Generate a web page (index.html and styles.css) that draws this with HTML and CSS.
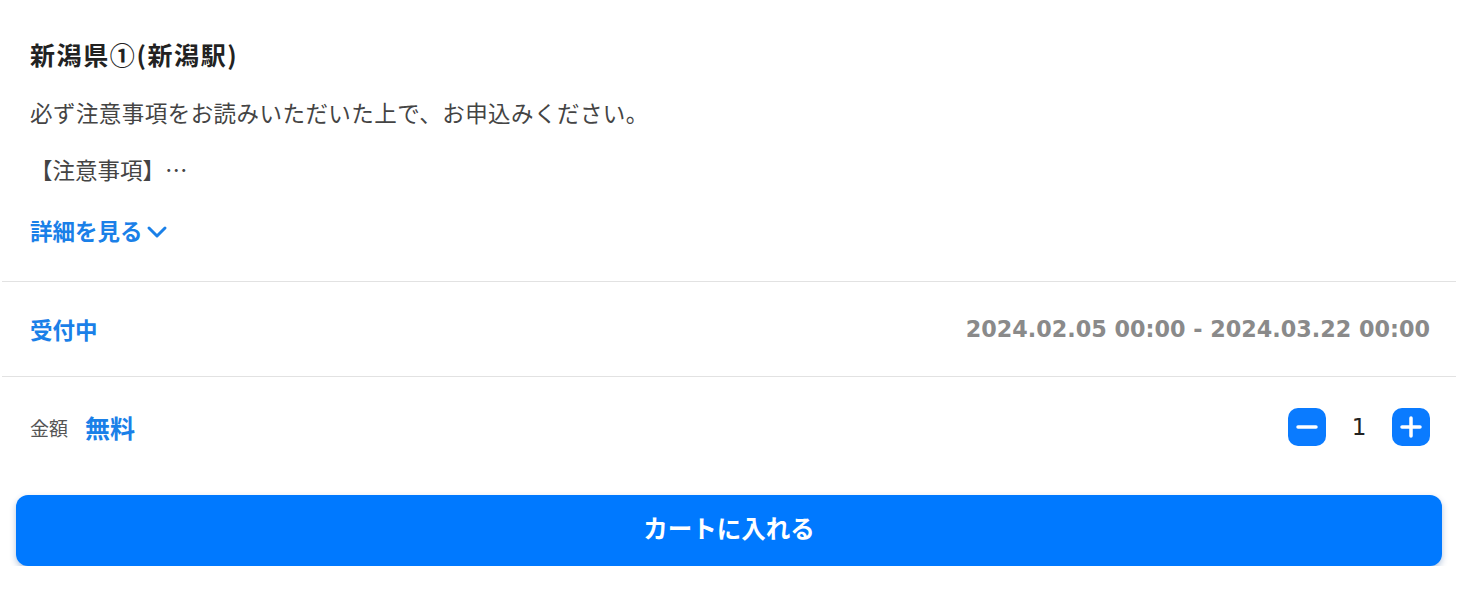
FILE: index.html
```html
<!DOCTYPE html>
<html lang="ja">
<head>
  <meta charset="UTF-8">
  <meta name="viewport" content="width=device-width, initial-scale=1.0">
  <title>新潟県①(新潟駅)</title>
  <link rel="stylesheet" href="styles.css">
</head>
<body>
  <div class="item">
    <div class="item-head">
      <h2 class="item-title">新潟県①(新潟駅)</h2>
      <p class="item-lead">必ず注意事項をお読みいただいた上で、お申込みください。</p>
      <p class="item-note">【注意事項】…</p>
      <a class="item-more" href="#">詳細を見る
        <svg class="chevron" width="22" height="16" viewBox="0 0 22 16">
          <path d="M3 4 L11 12 L19 4" fill="none" stroke="currentColor" stroke-width="3" stroke-linecap="round" stroke-linejoin="round"/>
        </svg>
      </a>
    </div>

    <div class="item-row status-row">
      <span class="status">受付中</span>
      <span class="period">2024.02.05 00:00 - 2024.03.22 00:00</span>
    </div>

    <div class="item-row price-row">
      <div class="price">
        <span class="price-label">金額</span>
        <span class="price-value">無料</span>
      </div>
      <div class="qty">
        <button class="qty-btn" aria-label="減らす">
          <svg width="38" height="38" viewBox="0 0 38 38">
            <path d="M10 19 H28" stroke="#fff" stroke-width="3.5" stroke-linecap="round"/>
          </svg>
        </button>
        <span class="qty-num">1</span>
        <button class="qty-btn" aria-label="増やす">
          <svg width="38" height="38" viewBox="0 0 38 38">
            <path d="M10 19 H28 M19 10 V28" stroke="#fff" stroke-width="3.5" stroke-linecap="round"/>
          </svg>
        </button>
      </div>
    </div>

    <button class="cart-btn">カートに入れる</button>
  </div>
</body>
</html>
```

FILE: styles.css
```css
body {
  margin: 0;
  background: #ffffff;
  font-family: "Noto Sans CJK JP", "DejaVu Sans", sans-serif;
  color: #333333;
}
.item {
  margin: 0 26px 0 2px;
}
.item-head {
  padding: 35px 28px 34px;
  border-bottom: 1px solid #e2e2e2;
}
.item-title {
  margin: 0 0 22px;
  font-size: 25px;
  line-height: 38px;
  font-weight: bold;
  letter-spacing: 1.6px;
  color: #222222;
}
.item-lead {
  margin: 0 0 23px;
  font-size: 22.5px;
  line-height: 34px;
  letter-spacing: 0.45px;
  color: #444444;
}
.item-note {
  margin: 0 0 27px;
  font-size: 22.5px;
  line-height: 34px;
  color: #444444;
}
.item-more {
  display: inline-flex;
  align-items: center;
  gap: 3px;
  font-size: 22.5px;
  line-height: 34px;
  font-weight: bold;
  color: #1a80e8;
  text-decoration: none;
}
.chevron {
  margin-top: 4px;
}
.item-row {
  display: flex;
  align-items: center;
  justify-content: space-between;
  padding: 0 26px 0 28px;
}
.status-row {
  height: 94px;
  border-bottom: 1px solid #e2e2e2;
}
.status {
  font-size: 22.5px;
  font-weight: bold;
  color: #1a80e8;
}
.period {
  font-family: "DejaVu Sans", sans-serif;
  font-size: 22.3px;
  font-weight: bold;
  color: #8a8a8a;
}
.price-row {
  padding-top: 31px;
  padding-bottom: 33px;
}
.price {
  display: flex;
  align-items: center;
  gap: 17px;
}
.price-label {
  font-size: 19px;
  color: #555555;
}
.price-value {
  font-size: 25px;
  font-weight: bold;
  color: #1a80e8;
}
.qty {
  display: flex;
  align-items: center;
  gap: 20px;
}
.qty-btn {
  width: 38px;
  height: 38px;
  padding: 0;
  border: none;
  border-radius: 10px;
  background: #0a7bff;
  cursor: pointer;
}
.qty-btn svg {
  display: block;
}
.qty-num {
  min-width: 26px;
  text-align: center;
  font-family: "DejaVu Sans", sans-serif;
  font-size: 23px;
  color: #222222;
}
.cart-btn {
  display: block;
  width: calc(100% - 28px);
  height: 71px;
  margin: 16px 14px 0;
  padding: 0 0 6px;
  border: none;
  border-radius: 12px;
  background: #0079ff;
  box-shadow: 0 3px 6px rgba(0, 60, 140, 0.3);
  color: #ffffff;
  font-family: "Noto Sans CJK JP", sans-serif;
  font-size: 24.5px;
  font-weight: bold;
  cursor: pointer;
}
```
